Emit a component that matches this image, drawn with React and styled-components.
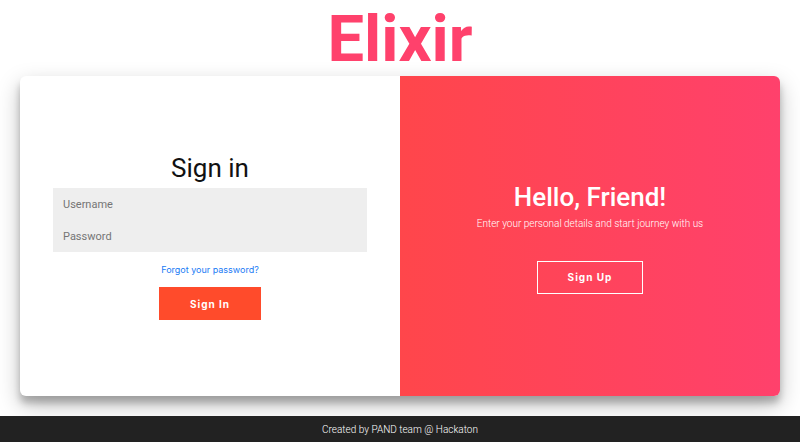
import React from "react";
import styled, { createGlobalStyle } from "styled-components";

const Global = createGlobalStyle`
  * { box-sizing: border-box; }
  body { margin: 0; background: #fff; color: #111; font-family: Roboto, "Liberation Sans", sans-serif; }
`;

const Page = styled.div`
  min-height: 100vh;
  display: flex;
  flex-direction: column;
`;

const Brand = styled.h1`
  margin: 0;
  padding-top: 2px;
  line-height: 74px;
  text-align: center;
  font-size: 65px;
  font-weight: 700;
  color: #ff416c;
`;

const Card = styled.main`
  flex: 1;
  margin: 0 20px 20px;
  display: grid;
  grid-template-columns: 1fr 1fr;
  border-radius: 6px;
  overflow: hidden;
  background: #fff;
  box-shadow: 0 9px 22px rgba(0, 0, 0, 0.25), 0 7px 7px rgba(0, 0, 0, 0.22);
`;

const SignInForm = styled.form`
  display: flex;
  flex-direction: column;
  align-items: center;
  justify-content: center;
  padding: 0 33px;
`;

const Title = styled.h2`
  margin: 0;
  font-size: 26px;
  line-height: 32px;
  font-weight: ${(p) => (p.$strong ? 500 : 400)};
`;

const Fields = styled.div`
  width: 100%;
  margin-top: 4px;
  display: flex;
  flex-direction: column;
`;

const Field = styled.input`
  width: 100%;
  height: 32px;
  padding: 0 10px;
  border: 0;
  border-radius: 0;
  background: #eee;
  font: 11px Roboto, sans-serif;
  &::placeholder { color: #757575; opacity: 1; }
`;

const ForgotLink = styled.a`
  margin: 10px 0 9px;
  font-family: Inter, sans-serif;
  font-size: 9px;
  line-height: 16px;
  color: #207bf5;
  text-decoration: none;
`;

const Button = styled.button`
  height: 33px;
  padding: 0 30px;
  border: 1px solid ${(p) => (p.$ghost ? "#fff" : "#ff4b2b")};
  background: ${(p) => (p.$ghost ? "transparent" : "#ff4b2b")};
  color: #fff;
  font: 700 10px Inter, sans-serif;
  letter-spacing: 1px;
`;

const Welcome = styled.section`
  display: flex;
  flex-direction: column;
  align-items: center;
  justify-content: center;
  padding-top: 2px;
  color: #fff;
  background: linear-gradient(to right, #ff464b, #ff416c);
`;

const Invite = styled.p`
  margin: 3px 0 29px;
  font-size: 10px;
  line-height: 16px;
  font-weight: 300;
`;

const Footer = styled.footer`
  height: 26px;
  display: flex;
  align-items: center;
  justify-content: center;
  background: #222;
  color: #fff;
  font-size: 10px;
  font-weight: 300;
`;

export default function App() {
  return (
    <Page>
      <Global />
      <Brand>Elixir</Brand>
      <Card>
        <SignInForm onSubmit={(e) => e.preventDefault()}>
          <Title>Sign in</Title>
          <Fields>
            <Field type="text" placeholder="Username" aria-label="Username" />
            <Field type="password" placeholder="Password" aria-label="Password" />
          </Fields>
          <ForgotLink href="#">Forgot your password?</ForgotLink>
          <Button type="submit">Sign In</Button>
        </SignInForm>
        <Welcome>
          <Title $strong>Hello, Friend!</Title>
          <Invite>Enter your personal details and start journey with us</Invite>
          <Button type="button" $ghost>Sign Up</Button>
        </Welcome>
      </Card>
      <Footer>Created by PAND team @ Hackaton</Footer>
    </Page>
  );
}
